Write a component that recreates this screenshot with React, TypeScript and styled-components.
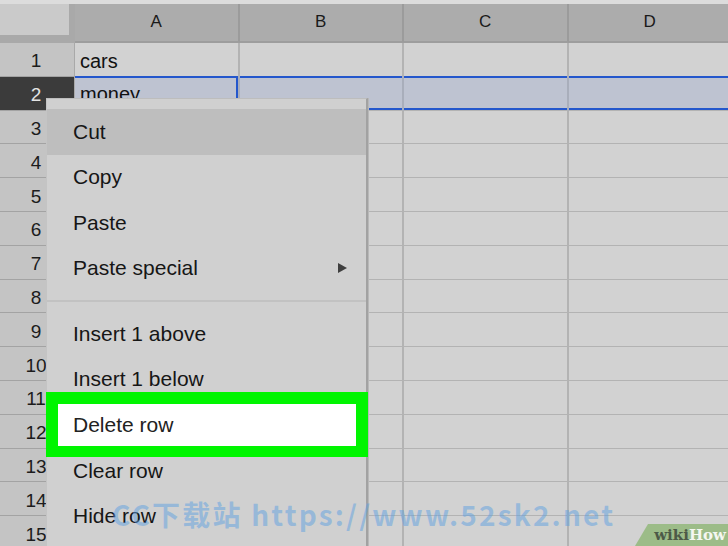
import React from 'react';
import styled, { createGlobalStyle } from 'styled-components';

const GlobalStyle = createGlobalStyle`
  html, body {
    margin: 0;
    padding: 0;
    background: #d6d6d6;
  }
  body {
    font-family: "Liberation Sans", Arial, sans-serif;
  }
`;

const columns = ['A', 'B', 'C', 'D'];
const rows = Array.from({ length: 15 }, (_, i) => i + 1);
const cellText: Record<string, string> = { 'A1': 'cars', 'A2': 'money' };

type MenuEntry = { label: string; arrow?: boolean; hover?: boolean; marked?: boolean } | 'sep';

const menuItems: MenuEntry[] = [
  { label: 'Cut', hover: true },
  { label: 'Copy' },
  { label: 'Paste' },
  { label: 'Paste special', arrow: true },
  'sep',
  { label: 'Insert 1 above' },
  { label: 'Insert 1 below' },
  { label: 'Delete row', marked: true },
  { label: 'Clear row' },
  { label: 'Hide row' },
];

const ContextMenu = () => (
  <Menu>
    {menuItems.map((item, i) =>
      item === 'sep' ? (
        <Separator key={i} />
      ) : item.marked ? (
        <MarkedItem key={i}>
          <span>{item.label}</span>
        </MarkedItem>
      ) : (
        <MenuItem key={i} $hover={item.hover}>
          <span>{item.label}</span>
          {item.arrow && <Arrow />}
        </MenuItem>
      )
    )}
  </Menu>
);

const App = () => {
  return (
    <Page>
      <GlobalStyle />
      <Sheet>
        <Corner />
        {columns.map((c) => (
          <ColHeader key={c}>{c}</ColHeader>
        ))}
        {rows.map((r) => (
          <React.Fragment key={r}>
            <RowHeader $active={r === 2}>{r}</RowHeader>
            {columns.map((c) => (
              <Cell key={c} $selected={r === 2} $current={r === 2 && c === 'A'}>
                {cellText[`${c}${r}`]}
              </Cell>
            ))}
          </React.Fragment>
        ))}
      </Sheet>
      <ContextMenu />
      <Watermark>CC下载站 https://www.52sk2.net</Watermark>
      <Badge>
        <span className="wiki">wiki</span>
        <span className="how">How</span>
      </Badge>
    </Page>
  );
};

export default App;

const Page = styled.div`
  position: relative;
  width: 728px;
  height: 546px;
  overflow: hidden;
  padding-top: 4px;
  box-sizing: border-box;
  background: #dcdcdc;
`;

const Sheet = styled.div`
  display: grid;
  grid-template-columns: 75px repeat(4, 164.5px);
  grid-template-rows: 39px repeat(15, 33.8px);
  background: #d2d2d2;
`;

const Corner = styled.div`
  box-sizing: border-box;
  background: #cacaca;
  border-right: 6px solid #a9a9a9;
  border-bottom: 8px solid #a9a9a9;
`;

const ColHeader = styled.div`
  box-sizing: border-box;
  background: #acacac;
  border-right: 2px solid #9b9b9b;
  border-bottom: 2px solid #9d9d9d;
  display: flex;
  align-items: center;
  justify-content: center;
  padding-bottom: 1px;
  font-size: 17px;
  color: #1a1a1a;
`;

const RowHeader = styled.div<{ $active?: boolean }>`
  box-sizing: border-box;
  background: ${(p) => (p.$active ? '#3b3b3b' : '#c4c4c4')};
  color: ${(p) => (p.$active ? '#e4e4e4' : '#1c1c1c')};
  border-bottom: 1px solid #a3a3a3;
  border-right: 1px solid #a9a9a9;
  display: flex;
  align-items: center;
  justify-content: center;
  padding: 4px 2px 0 0;
  font-size: 19px;
`;

const Cell = styled.div<{ $selected?: boolean; $current?: boolean }>`
  box-sizing: border-box;
  background: ${(p) => (p.$selected ? '#bec3d1' : '#d2d2d2')};
  border-right: 2px solid #b3b3b3;
  border-bottom: 1px solid #b3b3b3;
  padding: 4px 0 0 5px;
  display: flex;
  align-items: center;
  font-size: 20px;
  color: #111;
  box-shadow: ${(p) =>
    p.$current
      ? 'inset 0 2px 0 #2457cc, inset 0 -2px 0 #2457cc, inset -2px 0 0 #2457cc'
      : p.$selected
      ? 'inset 0 2px 0 #2457cc, inset 0 -2px 0 #2457cc'
      : 'none'};
  ${(p) => p.$selected && 'margin-top: -1px; border-right-color: #a9aebb;'}
`;

const Menu = styled.div`
  position: absolute;
  left: 46px;
  top: 98px;
  width: 322px;
  height: 470px;
  box-sizing: border-box;
  padding-top: 10px;
  background: #d0d0d0;
  border-top: 1px solid #bdbdbd;
  border-left: 1px solid #c4c4c4;
  border-right: 2px solid #a2a2a2;
  box-shadow: 1px 0 0 #b8b8b8;
  display: flex;
  flex-direction: column;
`;

const MenuItem = styled.div<{ $hover?: boolean }>`
  height: 45.5px;
  flex-shrink: 0;
  display: flex;
  align-items: center;
  justify-content: space-between;
  padding: 0 19px 0 26px;
  background: ${(p) => (p.$hover ? '#bebebe' : 'transparent')};
  font-size: 21px;
  color: #161616;
`;

const MarkedItem = styled.div`
  height: 65px;
  flex-shrink: 0;
  margin: -10px -2px -9px -1px;
  box-sizing: border-box;
  border: 12px solid #00f500;
  border-bottom-width: 11px;
  background: #ffffff;
  display: flex;
  align-items: center;
  padding-left: 15px;
  font-size: 21px;
  color: #222;
  position: relative;
`;

const Arrow = styled.span`
  width: 0;
  height: 0;
  border-top: 5px solid transparent;
  border-bottom: 5px solid transparent;
  border-left: 9px solid #3f3f3f;
`;

const Separator = styled.div`
  height: 20px;
  flex-shrink: 0;
  display: flex;
  align-items: center;
  &::after {
    content: '';
    flex: 1;
    height: 2px;
    background: #c2c2c2;
  }
`;

const Watermark = styled.div`
  position: absolute;
  left: 112px;
  top: 494px;
  font-family: "Noto Sans CJK SC", "DejaVu Sans", sans-serif;
  font-weight: 700;
  font-size: 28px;
  letter-spacing: 2.2px;
  color: rgba(95, 160, 225, 0.5);
  white-space: nowrap;
`;

const Badge = styled.div`
  position: absolute;
  right: 0;
  bottom: 0;
  width: 93px;
  height: 22px;
  background: #9cbc88;
  clip-path: polygon(13px 0, 100% 0, 100% 100%, 0 100%);
  display: flex;
  align-items: center;
  justify-content: flex-end;
  padding-right: 2px;
  box-sizing: border-box;
  font-family: "DejaVu Serif", "Liberation Serif", serif;
  font-weight: 700;
  font-size: 15px;
  .wiki {
    color: #4d5a47;
  }
  .how {
    color: #f4f7f1;
  }
`;
